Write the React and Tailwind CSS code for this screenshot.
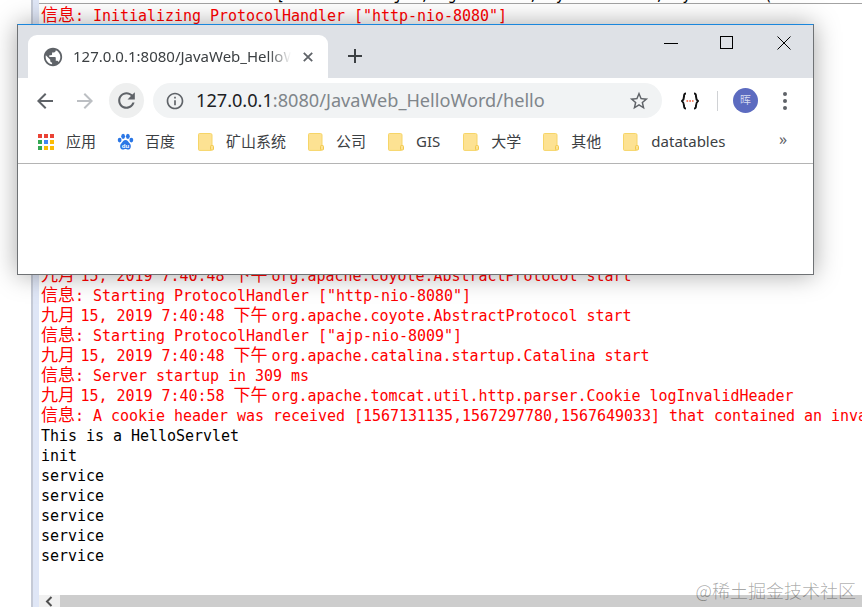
import React from "react";

const mono = "[font-family:'DejaVu_Sans_Mono','Noto_Sans_CJK_SC',monospace]";

function Cn({ children, w }) {
  return <span className={`inline-block text-[17px] leading-[20px] ${w}`}>{children}</span>;
}

function Info({ children }) {
  return (
    <div className="h-5 leading-5 text-[#ff0000] whitespace-pre">
      <Cn w="w-[34px]">信息</Cn>{": " + children}
    </div>
  );
}

function Stamp({ time, children }) {
  return (
    <div className="h-5 leading-5 text-[#ff0000] whitespace-pre">
      <Cn w="w-[39.5px]">九月</Cn>{`15, 2019 ${time} `}<Cn w="w-[38px]">下午</Cn>{children}
    </div>
  );
}

function Out({ children }) {
  return <div className="h-5 pt-px leading-5 text-black whitespace-pre">{children}</div>;
}

function Icon({ d, className }) {
  return (
    <svg viewBox="0 0 24 24" className={className} fill="currentColor">
      <path d={d} />
    </svg>
  );
}

function Folder() {
  return (
    <svg viewBox="0 0 16 18" className="w-4 h-[18px] flex-none">
      <path d="M1.500 .5h11a1.500 1.500 0 0 1 1.500 1.500v14a1.500 1.500 0 0 1-1 1.400H1.500a1 1 0 0 1-1-1V1.500a1 1 0 0 1 1-1z" fill="#fde293" stroke="#f6d568" />
      <rect x="12.500" y="12.500" width="3" height="4.500" rx="1" fill="#fde293" stroke="#f2c94c" />
    </svg>
  );
}

function AppsGrid() {
  const colors = ["#ea4335", "#ea4335", "#ea4335", "#34a853", "#4285f4", "#fbbc05", "#34a853", "#fbbc05", "#fbbc05"];
  return (
    <div className="grid grid-cols-3 gap-[2px] w-4 h-4 flex-none">
      {colors.map((c, i) => (
        <svg key={i} viewBox="0 0 4 4" className="w-1 h-1">
          <rect width="4" height="4" fill={c} />
        </svg>
      ))}
    </div>
  );
}

function Baidu() {
  return (
    <svg viewBox="0 0 18 18" className="w-[17px] h-[18px] flex-none -mr-px" fill="#2b77e6">
      <ellipse cx="2.800" cy="7" rx="2" ry="2.600" />
      <ellipse cx="6.500" cy="3" rx="2" ry="2.800" />
      <ellipse cx="11.500" cy="3" rx="2" ry="2.800" />
      <ellipse cx="15.200" cy="7" rx="2" ry="2.600" />
      <path d="M9 7c2 0 3 2 4.500 3.500 2 2 1.500 6.500-2 6.500-1 0-1.500-.5-2.500-.5S7.500 17 6.500 17c-3.500 0-4-4.500-2-6.500C6 9 7 7 9 7z" />
      <text x="9" y="15.500" textAnchor="middle" fontSize="6.500" fontWeight="700" fill="#fff" fontFamily="Liberation Sans, sans-serif">du</text>
    </svg>
  );
}

function Bookmark({ icon, label, className = "" }) {
  return (
    <div className={`flex items-center gap-3 flex-none ${className}`}>
      {icon}
      <span className="text-[15px] text-[#3c4043]">{label}</span>
    </div>
  );
}

function BrowserWindow() {
  return (
    <div className="absolute left-[17px] top-[24px] w-[797px] h-[251px] flex flex-col bg-white border border-[#6f7275] border-t-[#1a86dc] shadow-[0_0_24px_rgba(0,0,0,0.35)] font-['Noto_Sans','Noto_Sans_CJK_SC',sans-serif]">
      {/* tab strip */}
      <div className="h-[53px] flex-none bg-[#dee1e6] flex items-end pl-[10px] relative">
        <div className="w-[300px] h-[43px] bg-white rounded-t-[9px] flex items-center pl-[15px] pr-[15px] relative">
          <Icon
            className="w-[22px] h-[22px] text-[#5f6368] flex-none -ml-[1px]"
            d="M12 2C6.480 2 2 6.480 2 12s4.480 10 10 10 10-4.480 10-10S17.520 2 12 2zm-1 17.930c-3.950-.490-7-3.850-7-7.930 0-.620.080-1.210.210-1.790L9 15v1c0 1.100.900 2 2 2v1.930zm6.900-2.540c-.260-.810-1-1.390-1.900-1.390h-1v-3c0-.550-.450-1-1-1H8v-2h2c.550 0 1-.450 1-1V7h2c1.100 0 2-.900 2-2v-.410c2.930 1.190 5 4.060 5 7.410 0 2.080-.800 3.970-2.100 5.390z"
          />
          <div className="ml-[9px] w-[218px] overflow-hidden whitespace-nowrap text-[15px] text-[#3c4043] [mask-image:linear-gradient(to_right,black_90%,transparent)]">
            127.0.0.1:8080/JavaWeb_HelloWord/hello
          </div>
          <svg viewBox="0 0 10 10" className="w-[10px] h-[10px] ml-auto text-[#5f6368]" stroke="currentColor" strokeWidth="1.800">
            <path d="M.800 .800l8.400 8.400M9.200 .800L.800 9.200" />
          </svg>
        </div>
        <svg viewBox="0 0 16 16" className="w-4 h-4 text-[#3c4043] ml-[19px] mb-[14px]" stroke="currentColor" strokeWidth="2">
          <path d="M8 1v14M1 8h14" />
        </svg>
        <div className="absolute right-[22px] top-[11px] flex items-start gap-[40px] text-black">
          <svg viewBox="0 0 16 14" className="w-4 h-[14px]" stroke="currentColor" strokeWidth="1" fill="none"><path d="M0 7.500h14" /></svg>
          <svg viewBox="0 0 14 14" className="w-[14px] h-[14px]" stroke="currentColor" strokeWidth="1" fill="none"><rect x=".500" y=".500" width="12" height="12" /></svg>
          <svg viewBox="0 0 14 14" className="w-[14px] h-[14px] ml-[3px]" stroke="currentColor" strokeWidth="1" fill="none"><path d="M.500 .500l13 13M13.500 .500l-13 13" /></svg>
        </div>
      </div>

      {/* toolbar */}
      <div className="h-[45px] flex-none flex items-center pl-[15px] pr-[16px]">
        <Icon className="w-6 h-6 text-[#5f6368] flex-none" d="M20 11H7.830l5.590-5.590L12 4l-8 8 8 8 1.410-1.410L7.830 13H20v-2z" />
        <Icon className="w-6 h-6 text-[#bcbfc3] flex-none ml-4" d="M4 11h12.170l-5.590-5.590L12 4l8 8-8 8-1.410-1.410L16.170 13H4v-2z" />
        <div className="ml-[12px] w-[35px] h-[35px] rounded-full bg-[#eeefef] flex items-center justify-center flex-none">
          <Icon className="w-[25px] h-[25px] text-[#5f6368]" d="M17.650 6.350C16.200 4.900 14.210 4 12 4c-4.420 0-7.990 3.580-7.990 8s3.570 8 7.990 8c3.730 0 6.840-2.550 7.730-6h-2.080c-.820 2.330-3.040 4-5.650 4-3.310 0-6-2.690-6-6s2.690-6 6-6c1.660 0 3.140.690 4.220 1.780L13 11h7V4l-2.350 2.350z" />
        </div>
        <div className="ml-[9px] w-[509px] h-[35px] rounded-full bg-[#f1f3f4] flex items-center pl-[12px] pr-[12px] flex-none">
          <Icon className="w-5 h-5 text-[#5f6368] flex-none" d="M11 7h2v2h-2zm0 4h2v6h-2zm1-9C6.480 2 2 6.480 2 12s4.480 10 10 10 10-4.480 10-10S17.520 2 12 2zm0 18c-4.410 0-8-3.590-8-8s3.590-8 8-8 8 3.590 8 8-3.590 8-8 8z" />
          <span className="ml-[11px] text-[18.15px] text-[#80868b] whitespace-nowrap">
            <span className="text-[#202124]">127.0.0.1</span>:8080/JavaWeb_HelloWord/hello
          </span>
          <Icon className="w-[22px] h-[22px] text-[#5f6368] flex-none ml-auto" d="M22 9.240l-7.190-.620L12 2 9.190 8.630 2 9.240l5.460 4.730L5.820 21 12 17.270 18.180 21l-1.630-7.030L22 9.240zM12 15.400l-3.760 2.270 1-4.280-3.320-2.880 4.380-.380L12 6.100l1.710 4.040 4.380.380-3.320 2.880 1 4.280L12 15.400z" />
        </div>
        <svg viewBox="0 0 18 18" className="w-[18px] h-[18px] ml-[19px] flex-none" fill="none" stroke="#111" strokeWidth="2">
          <path d="M5 1.500c-2 0-2 1-2 3s0 3-2 4.500c2 1.500 2 2.500 2 4.500s0 3 2 3M13 1.500c2 0 2 1 2 3s0 3 2 4.500c-2 1.500-2 2.500-2 4.500s0 3-2 3" />
          <path d="M5.500 9h7" stroke="#f0532d" strokeWidth="1.600" strokeDasharray="1.600 1.200" />
        </svg>
        <div className="w-px h-5 bg-[#d0d2d5] ml-[18px] flex-none" />
        <div className="w-[25px] h-[25px] rounded-full bg-[#5c6bc0] ml-[15px] flex items-center justify-center text-[11px] text-[#d7dbf0] flex-none">
          晖
        </div>
        <div className="ml-[25px] flex flex-col gap-[3px] flex-none">
          <div className="w-1 h-1 rounded-full bg-[#5f6368]" />
          <div className="w-1 h-1 rounded-full bg-[#5f6368]" />
          <div className="w-1 h-1 rounded-full bg-[#5f6368]" />
        </div>
      </div>

      {/* bookmarks */}
      <div className="h-[41px] flex-none flex items-center gap-[22px] pl-[20px] pb-[3px] border-b border-[#b4b4b4] relative">
        <Bookmark icon={<AppsGrid />} label="应用" />
        <Bookmark icon={<Baidu />} label="百度" className="-ml-px mr-px" />
        <Bookmark icon={<Folder />} label="矿山系统" />
        <Bookmark icon={<Folder />} label="公司" />
        <Bookmark icon={<Folder />} label="GIS" className="mr-px" />
        <Bookmark icon={<Folder />} label="大学" />
        <Bookmark icon={<Folder />} label="其他" />
        <Bookmark icon={<Folder />} label="datatables" />
        <span className="absolute left-[761px] top-[6px] text-[16px] text-[#5f6368] leading-5">»</span>
      </div>

      <div className="flex-1" />
    </div>
  );
}

export default function App() {
  return (
    <div className="relative w-[862px] h-[607px] overflow-hidden bg-white flex">
      <div className="w-[31px] flex-none" />
      <div className="w-[2px] flex-none bg-[#c5cad6]" />
      <div className="w-[6px] flex-none bg-[#dfe6f6]" />

      <div className="flex-1 min-w-0 flex flex-col">
        <div className={`h-[3px] flex-none overflow-hidden text-[15px] text-black ${mono}`}>
          <div className="h-5 leading-5 -mt-[15px] pl-[2px] whitespace-pre">
            {"                          [            j  ,  g        ,  y      _   ,  y        ("}
          </div>
        </div>
        <div className="h-px flex-none bg-[#a3a3a3] mb-px" />

        <div className={`flex-1 min-h-0 overflow-hidden pl-[2px] text-[15px] tracking-[-0.03px] ${mono}`}>
          <Info>{'Initializing ProtocolHandler ["http-nio-8080"]'}</Info>
          <div className="h-[240px]" />
          <Stamp time="7:40:48">org.apache.coyote.AbstractProtocol start</Stamp>
          <Info>{'Starting ProtocolHandler ["http-nio-8080"]'}</Info>
          <Stamp time="7:40:48">org.apache.coyote.AbstractProtocol start</Stamp>
          <Info>{'Starting ProtocolHandler ["ajp-nio-8009"]'}</Info>
          <Stamp time="7:40:48">org.apache.catalina.startup.Catalina start</Stamp>
          <Info>Server startup in 309 ms</Info>
          <Stamp time="7:40:58">org.apache.tomcat.util.http.parser.Cookie logInvalidHeader</Stamp>
          <Info>A cookie header was received [1567131135,1567297780,1567649033] that contained an invalid cookie.</Info>
          <Out>This is a HelloServlet</Out>
          <Out>init</Out>
          <Out>service</Out>
          <Out>service</Out>
          <Out>service</Out>
          <Out>service</Out>
          <Out>service</Out>
        </div>

        <div className="h-3 flex-none bg-[#cdcdcd] flex">
          <div className="w-[21px] bg-[#f0f0f0] flex items-center justify-center pr-[2px]">
            <svg viewBox="0 0 8 12" className="w-2 h-3 text-[#505050]" fill="none" stroke="currentColor" strokeWidth="2">
              <path d="M6.500 2L2 6.500 6.500 11" />
            </svg>
          </div>
        </div>
      </div>

      <BrowserWindow />

      <div className="absolute right-[6px] top-[578px] text-[18px] leading-6 font-light text-black/35 font-['Noto_Sans_CJK_SC',sans-serif] whitespace-nowrap">
        @稀土掘金技术社区
      </div>
    </div>
  );
}
